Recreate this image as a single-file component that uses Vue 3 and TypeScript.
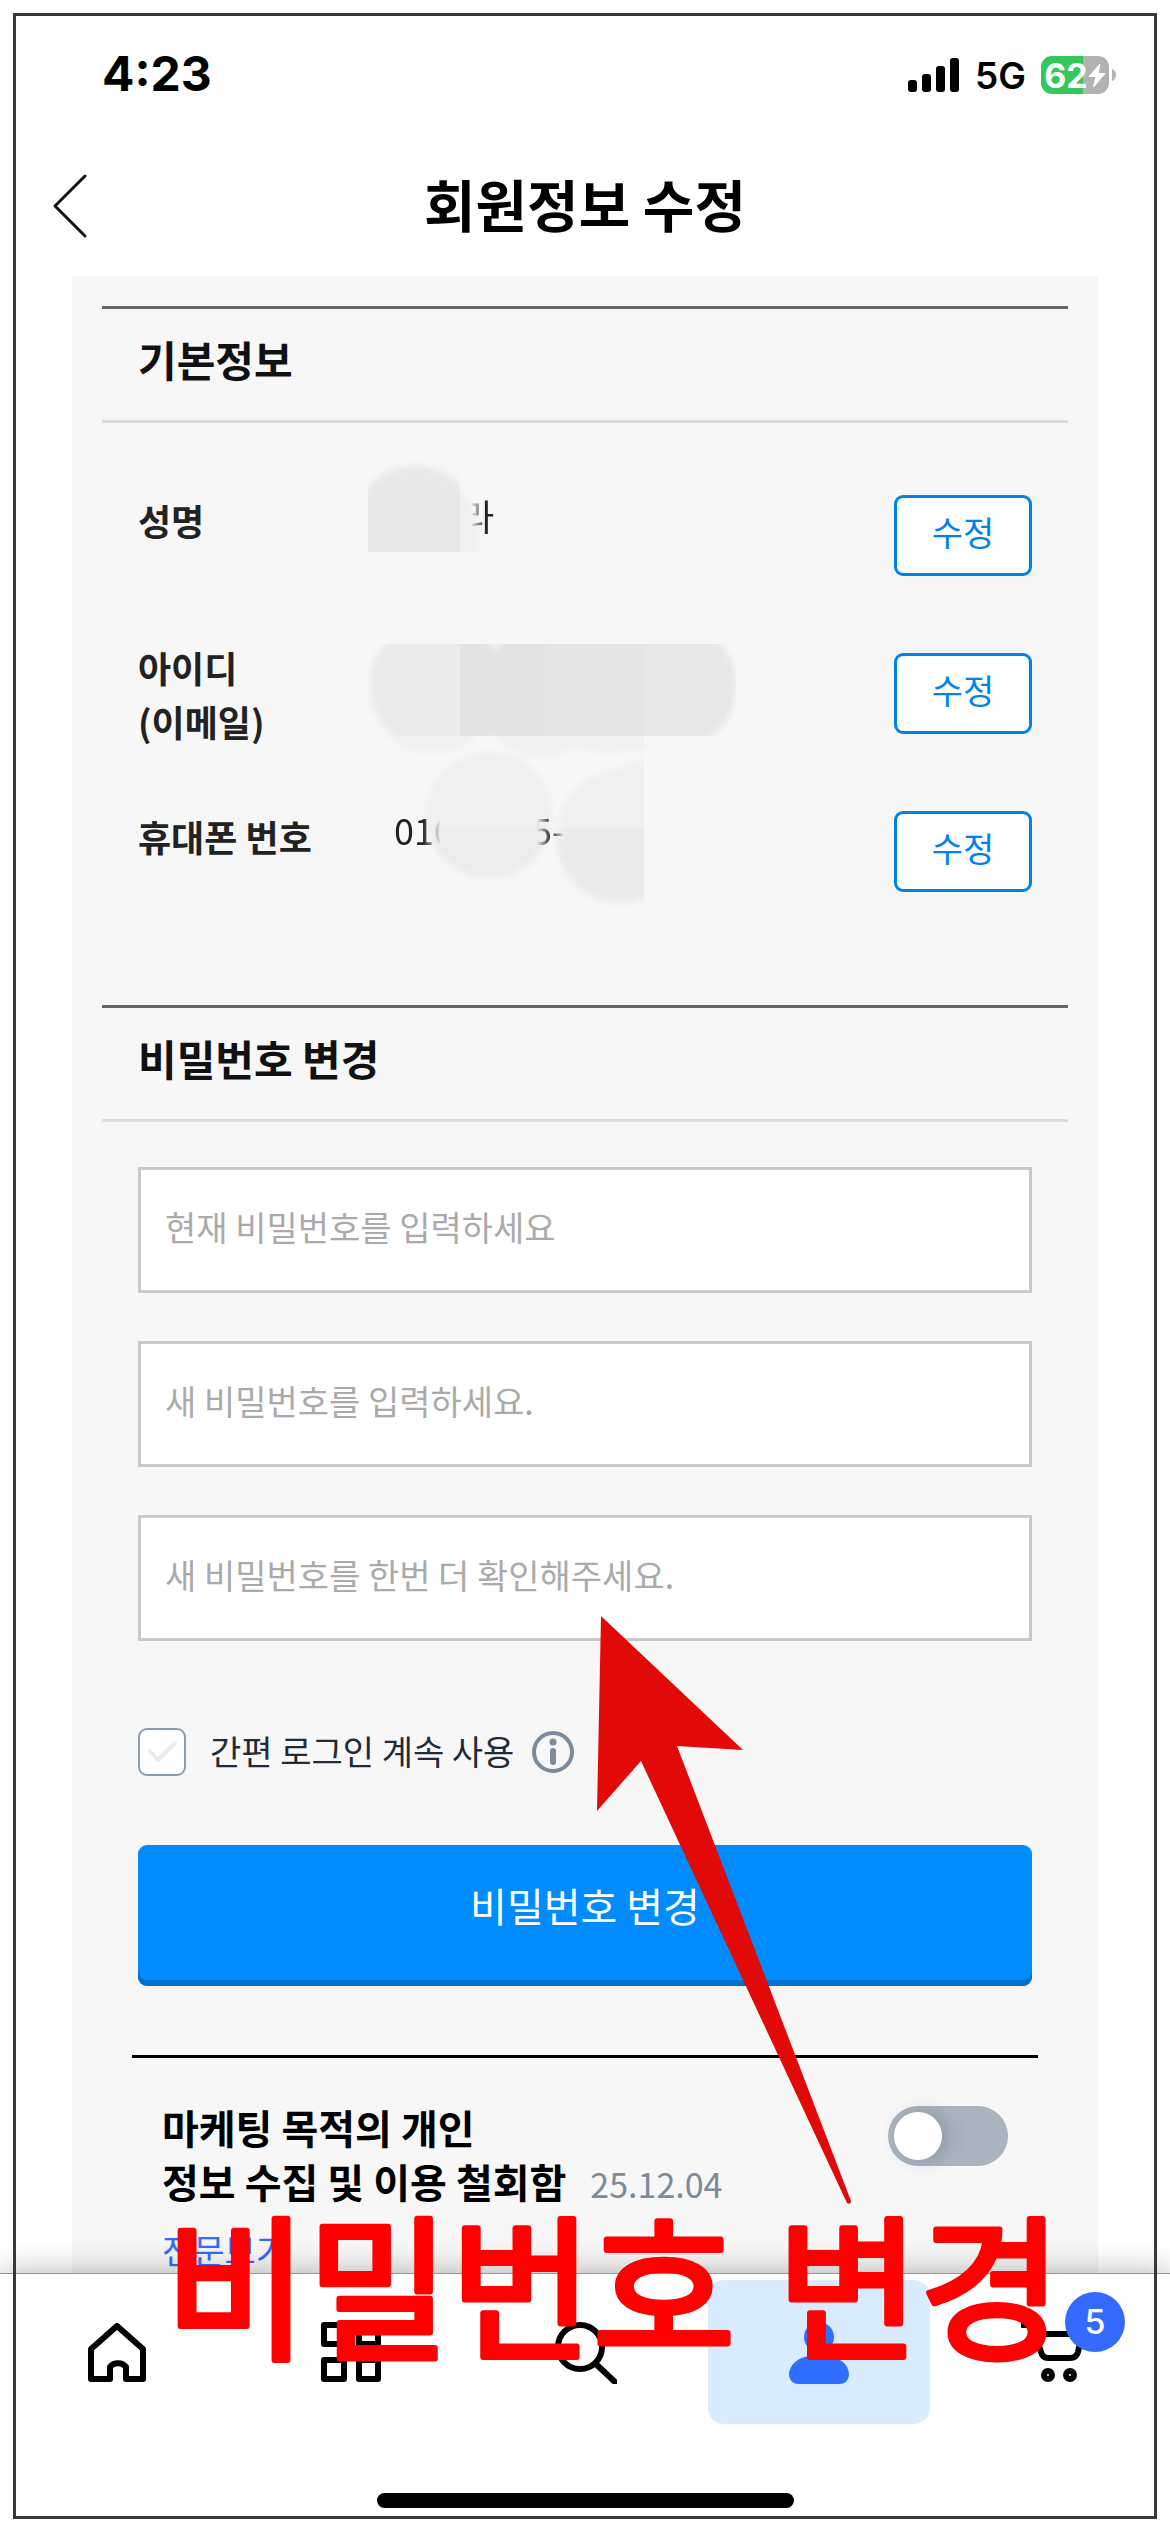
<script setup lang="ts">
import { ref } from 'vue'

interface PasswordField {
  id: string
  label: string
  placeholder: string
}

const fields: PasswordField[] = [
  { id: 'current', label: '현재 비밀번호', placeholder: '현재 비밀번호를 입력하세요' },
  { id: 'next', label: '새 비밀번호', placeholder: '새 비밀번호를 입력하세요.' },
  { id: 'confirm', label: '새 비밀번호 확인', placeholder: '새 비밀번호를 한번 더 확인해주세요.' },
]

const keepLogin = ref(false)
const marketing = ref(false)
const signalBars: number[] = [12, 18, 26, 34]
const cartCount = ref(5)
</script>

<template>
  <div class="screen">
    <div class="status">
      <span class="time">4:23</span>
      <div class="status-right">
        <span class="signal">
          <i v-for="h in signalBars" :key="h" :style="{ height: h + 'px' }"></i>
        </span>
        <span class="network">5G</span>
        <span class="battery-wrap">
          <span class="battery">
            <span>62</span>
            <svg width="18" height="25" viewBox="0 0 18 25" aria-hidden="true">
              <path d="M12 1 1 13.500h7L5.500 24 17 10.500h-7z" fill="#fff" stroke="#fff" stroke-linejoin="round" />
            </svg>
          </span>
          <svg width="4" height="12" viewBox="0 0 4 12" aria-hidden="true"><path d="M0 0q4 1.500 4 6t-4 6z" fill="#b2b2b2" /></svg>
        </span>
      </div>
    </div>

    <header class="bar">
      <button class="back" type="button" aria-label="뒤로">
        <svg width="36" height="66" viewBox="0 0 36 66" fill="none" stroke="#111" stroke-width="3" stroke-linecap="round" stroke-linejoin="round">
          <path d="M33 3 3 33l30 30" />
        </svg>
      </button>
      <h1>회원정보 수정</h1>
    </header>

    <main class="panel">
      <section>
        <h2>기본정보</h2>
        <div class="info">
          <div class="row">
            <span class="label">성명</span>
            <span class="value name"><span>라</span></span>
            <button class="edit" type="button">수정</button>
          </div>
          <div class="row">
            <span class="label two-line">아이디<br />(이메일)</span>
            <span class="value"></span>
            <button class="edit" type="button">수정</button>
          </div>
          <div class="row">
            <span class="label">휴대폰 번호</span>
            <span class="value phone"><span class="fade-end">010</span><span class="fade-both">5-</span></span>
            <button class="edit" type="button">수정</button>
          </div>
          <svg class="smudge" width="400" height="470" viewBox="0 0 400 470" aria-hidden="true">
            <defs>
              <filter id="soft" x="-20%" y="-20%" width="140%" height="140%"><feGaussianBlur stdDeviation="3" /></filter>
              <clipPath id="tile-name"><path d="M18 0h92v102H18z" /></clipPath>
              <clipPath id="tile-name-edge"><path d="M110 0h92v102h-92z" /></clipPath>
              <clipPath id="tile-mail-start"><path d="M18 194h92v92H18z" /></clipPath>
              <clipPath id="tile-mail-mid"><path d="M110 194h184v92H110z" /></clipPath>
              <clipPath id="tile-mail-end"><path d="M294 194h92v92h-92z" /></clipPath>
              <clipPath id="tile-under"><path d="M18 286h276v92H18z" /></clipPath>
              <clipPath id="tile-low"><path d="M18 378h276v92H18z" /></clipPath>
            </defs>
            <g clip-path="url(#tile-name)"><circle cx="65" cy="80" r="64" fill="#e8e8e8" filter="url(#soft)" /></g>
            <g clip-path="url(#tile-name-edge)"><circle cx="65" cy="85" r="63" fill="#f0f0f0" filter="url(#soft)" /></g>
            <g clip-path="url(#tile-mail-start)"><circle cx="82" cy="236" r="63" fill="#ebebeb" filter="url(#soft)" /></g>
            <g clip-path="url(#tile-mail-mid)">
              <g filter="url(#soft)">
                <path d="M90 170h38l17 32 17-32h40v130h-45l-16-15-12 15H90z" fill="#e3e3e3" />
                <path d="M198 170h110v130H198z" fill="#e5e5e5" />
              </g>
            </g>
            <g clip-path="url(#tile-mail-end)">
              <path d="M280 170h40a66 66 0 0 1 0 132h-40z" fill="#e7e7e7" filter="url(#soft)" />
            </g>
            <g clip-path="url(#tile-under)">
              <g filter="url(#soft)" fill="#f1f1f1">
                <circle cx="82" cy="240" r="63" />
                <circle cx="192" cy="243" r="63" />
                <circle cx="256" cy="240" r="63" />
                <path d="M256 260h60v37l-60 6z" />
              </g>
              <circle cx="139" cy="365" r="63" fill="#f0f0f0" filter="url(#soft)" />
              <path d="M206 400c0-44 18-68 42-76 30-8 40-15 66-22v98z" fill="#f0f0f0" filter="url(#soft)" />
            </g>
            <g clip-path="url(#tile-low)">
              <circle cx="139" cy="365" r="63" fill="#ececec" filter="url(#soft)" />
              <circle cx="270" cy="390" r="63" fill="#ebebeb" filter="url(#soft)" />
            </g>
          </svg>
        </div>
      </section>

      <section>
        <h2>비밀번호 변경</h2>
        <form class="form" @submit.prevent>
          <input v-for="f in fields" :key="f.id" class="field" type="password" :aria-label="f.label" :placeholder="f.placeholder" />
          <div class="keep">
            <span class="check">
              <input id="keep" v-model="keepLogin" type="checkbox" />
              <svg viewBox="0 0 48 48" fill="none" :stroke="keepLogin ? '#008cff' : '#e9ecef'" stroke-width="4" stroke-linecap="round" stroke-linejoin="round">
                <path d="M12 23l8 9 17-17" />
              </svg>
            </span>
            <label for="keep">간편 로그인 계속 사용</label>
            <button class="help" type="button" aria-label="도움말">
              <svg width="42" height="42" viewBox="0 0 42 42">
                <circle cx="21" cy="21" r="19" fill="none" stroke="#7b8b9a" stroke-width="4" />
                <circle cx="21" cy="11" r="3.500" fill="#7b8b9a" />
                <rect x="18" y="17" width="6" height="17" rx="3" fill="#7b8b9a" />
              </svg>
            </button>
          </div>
          <button class="submit" type="submit">비밀번호 변경</button>
        </form>
      </section>

      <section class="consent">
        <div>
          <label for="marketing" class="consent-title">마케팅 목적의 개인<br />정보 수집 및 이용 철회함</label>
          <span class="date">25.12.04</span>
          <a class="more" href="#">전문보기</a>
        </div>
        <input id="marketing" v-model="marketing" class="toggle" type="checkbox" role="switch" />
      </section>
    </main>

    <nav class="tabs">
      <div class="tab-list">
        <a href="#" class="tab" aria-label="홈">
          <svg viewBox="0 0 64 64" fill="none" stroke="#000" stroke-width="6" stroke-linejoin="round">
            <path d="M32 6l26 23v30H41V47a9 7 0 0 0-16 0v12H6V29z" />
          </svg>
        </a>
        <a href="#" class="tab" aria-label="카테고리">
          <svg viewBox="0 0 64 64" fill="none" stroke="#000" stroke-width="6" stroke-linejoin="round">
            <path d="M5 5h20v19H5zM40 5h19v19H40zM5 40h20v19H5zM40 40h19v19H40z" />
          </svg>
        </a>
        <a href="#" class="tab" aria-label="검색">
          <svg viewBox="0 0 64 64" fill="none" stroke="#000" stroke-width="6" stroke-linecap="round">
            <circle cx="27" cy="27" r="22" />
            <path d="M44 45l18 17" />
          </svg>
        </a>
        <a href="#" class="tab active" aria-label="내 정보">
          <svg viewBox="0 0 64 64" fill="#2f6eff">
            <circle cx="32" cy="17" r="15" />
            <path d="M2 54c1-12 13-19 30-19s29 7 30 19c0 6-4 10-9 10H11c-5 0-9-4-9-10z" />
          </svg>
        </a>
        <a href="#" class="tab" aria-label="장바구니">
          <svg viewBox="0 0 64 64" fill="none" stroke="#000" stroke-width="6" stroke-linecap="round" stroke-linejoin="round">
            <path d="M2 5h6c3 0 4 2 5 5l7 22c1 4 3 6 7 6h22c4 0 7-2 8-6l4-18H15" />
            <circle cx="27" cy="55" r="4" />
            <circle cx="49" cy="55" r="4" />
          </svg>
          <span class="badge">{{ cartCount }}</span>
        </a>
      </div>
      <div class="home-indicator"></div>
    </nav>

    <div class="frame"></div>
    <svg class="note" viewBox="0 0 1170 2532" aria-hidden="true">
      <path d="M601 1616l142 134-66-4 174 455q0 4-4 2L641 1761l-44 50z" fill="#e10a08" />
      <text y="2347"><tspan x="165">비밀번호</tspan> <tspan x="777">변경</tspan></text>
    </svg>
  </div>
</template>

<style>
body {
  margin: 0;
  background: #fff;
}
</style>

<style scoped>
.screen {
  position: relative;
  display: flex;
  flex-direction: column;
  height: 100vh;
  overflow: hidden;
  background: #fff;
  color: #222;
  font-family: "Noto Sans CJK KR", "Noto Sans", sans-serif;
  font-size: 36px;
}
button,
input {
  font-family: inherit;
  margin: 0;
  box-sizing: border-box;
}
a {
  text-decoration: none;
}

.status {
  display: flex;
  align-items: center;
  justify-content: space-between;
  flex: none;
  height: 122px;
  padding: 14px 54px 0 102px;
  color: #000;
  font-family: Inter, sans-serif;
}
.time {
  font-size: 48px;
  line-height: 56px;
  padding-bottom: 2px;
  font-weight: 700;
}
.status-right {
  display: flex;
  align-items: center;
}
.signal {
  display: flex;
  align-items: flex-end;
  gap: 5px;
  margin-right: 16px;
}
.signal i {
  width: 9px;
  border-radius: 3px;
  background: #000;
}
.network {
  margin-right: 15px;
  font-size: 37px;
  font-weight: 600;
}
.battery-wrap {
  display: flex;
  align-items: center;
  gap: 3px;
}
.battery {
  display: flex;
  align-items: center;
  justify-content: center;
  box-sizing: border-box;
  width: 68px;
  height: 38px;
  border-radius: 11px;
  background: linear-gradient(90deg, #34c759 62%, #b2b2b2 62%);
  color: #fff;
  font-size: 34px;
  font-weight: 700;
}

.bar {
  position: relative;
  display: flex;
  align-items: center;
  justify-content: center;
  flex: none;
  height: 140px;
}
.back {
  position: absolute;
  left: 52px;
  padding: 0;
  border: 0;
  background: none;
}
.back svg {
  display: block;
}
h1 {
  margin: 0;
  padding-bottom: 6px;
  color: #000;
  font-size: 56px;
  line-height: 80px;
  font-weight: 700;
}

.panel {
  flex: 1;
  min-height: 0;
  overflow: hidden;
  margin: 0 72px;
  padding: 30px 30px 0;
  background: #f7f7f7;
}
h2 {
  margin: 0;
  padding: 0 36px 11px;
  border-top: 3px solid #666;
  border-bottom: 3px solid #ddd;
  color: #111;
  font-size: 42px;
  line-height: 100px;
  font-weight: 700;
}
.info {
  position: relative;
  display: flex;
  flex-direction: column;
  gap: 77px;
  padding: 72px 36px 113px;
}
.row {
  display: flex;
  align-items: flex-start;
  height: 81px;
}
.label {
  flex: none;
  width: 229px;
  margin-top: -2px;
  font-weight: 700;
  line-height: 54px;
}
.label.two-line {
  margin-top: -13px;
}
.value {
  position: relative;
  z-index: 1;
  flex: 1;
  font-size: 36px;
  line-height: 40px;
}
.name {
  padding-left: 94px;
}
.name span {
  mask-image: linear-gradient(90deg, transparent 30%, #000 75%);
}
.phone {
  display: flex;
  gap: 78px;
  padding-left: 27px;
  line-height: 36px;
}
.fade-end {
  mask-image: linear-gradient(90deg, #000 48%, transparent 78%);
}
.fade-both {
  mask-image: linear-gradient(90deg, transparent 15%, #000 60%, transparent 100%);
}
.edit {
  width: 138px;
  height: 81px;
  padding: 0 0 9px;
  border: 3px solid #0082eb;
  border-radius: 9px;
  background: #fff;
  color: #0082eb;
  font-size: 34px;
}
.smudge {
  position: absolute;
  left: 248px;
  top: 27px;
}

.form {
  display: flex;
  flex-direction: column;
  gap: 48px;
  padding: 45px 36px 69px;
}
.field {
  width: 100%;
  height: 126px;
  padding: 0 24px 8px;
  border: 3px solid #c9c9c9;
  border-radius: 0;
  background: #fff;
  color: #222;
  font-size: 34px;
}
.field::placeholder {
  color: #aaa;
  opacity: 1;
}
.keep {
  display: flex;
  align-items: center;
  height: 48px;
  margin: 39px 0 21px;
  color: #1f2b38;
  font-size: 34px;
}
.keep label {
  padding-bottom: 4px;
}
.check {
  position: relative;
  width: 48px;
  height: 48px;
  margin-right: 24px;
}
.check input {
  display: block;
  width: 48px;
  height: 48px;
  border: 2px solid #8d9cab;
  border-radius: 9px;
  background: #fff;
  appearance: none;
}
.check svg {
  position: absolute;
  inset: 0;
  pointer-events: none;
}
.help {
  margin-left: 18px;
  padding: 0;
  border: 0;
  background: none;
}
.help svg {
  display: block;
}
.submit {
  width: 100%;
  height: 141px;
  padding: 0 0 21px;
  border: 0;
  border-radius: 9px;
  background: #008cff;
  box-shadow: inset 0 -6px 0 #0070cf;
  color: #fff;
  font-size: 40px;
}

.consent {
  display: flex;
  align-items: flex-start;
  justify-content: space-between;
  margin: 0 30px;
  padding: 42px 30px 0;
  border-top: 3px solid #000;
}
.consent-title {
  color: #000;
  font-size: 40px;
  font-weight: 700;
  line-height: 54px;
}
.date {
  margin-left: 24px;
  color: #7a8b9a;
  font-size: 34px;
  line-height: 54px;
}
.more {
  display: block;
  margin-top: 15px;
  color: #346aff;
  font-size: 34px;
  line-height: 48px;
}
.toggle {
  flex: none;
  width: 120px;
  height: 60px;
  margin-top: 6px;
  padding: 6px;
  border-radius: 30px;
  background: #aab4bf;
  appearance: none;
}
.toggle::before {
  content: "";
  display: block;
  width: 48px;
  height: 48px;
  border-radius: 50%;
  background: #fff;
  box-shadow: 6px 0 18px rgba(60, 75, 95, 0.25);
}
.toggle:checked {
  background: #346aff;
}
.toggle:checked::before {
  margin-left: 60px;
}

.tabs {
  position: relative;
  display: flex;
  flex-direction: column;
  align-items: center;
  justify-content: space-between;
  flex: none;
  padding: 6px 0 24px;
  border-top: 1px solid #959595;
  background: #fff;
  box-shadow: 0 0 30px rgba(0, 0, 0, 0.3);
}
.tab-list {
  display: flex;
  width: 100%;
  margin-bottom: 69px;
}
.tab {
  position: relative;
  display: flex;
  flex: 1;
  align-items: center;
  justify-content: center;
  height: 144px;
  margin: 0 6px;
  border-radius: 16px;
}
.tab.active {
  background: #d9ebff;
}
.tab svg {
  width: 64px;
  height: 64px;
}
.badge {
  position: absolute;
  top: 12px;
  left: calc(50% + 12px);
  width: 60px;
  height: 60px;
  border-radius: 50%;
  background: #346aff;
  color: #fff;
  font-family: Inter, sans-serif;
  font-size: 34px;
  font-weight: 500;
  line-height: 60px;
  text-align: center;
}
.home-indicator {
  width: 417px;
  height: 15px;
  border-radius: 8px;
  background: #000;
}

.frame {
  position: absolute;
  inset: 13px;
  border: 3px solid #383838;
  pointer-events: none;
}
.note {
  position: absolute;
  inset: 0;
  width: 100%;
  height: 100%;
  pointer-events: none;
}
.note text {
  fill: #f00;
  stroke: #f00;
  stroke-width: 6px;
  stroke-linejoin: round;
  font-size: 155px;
}
</style>
